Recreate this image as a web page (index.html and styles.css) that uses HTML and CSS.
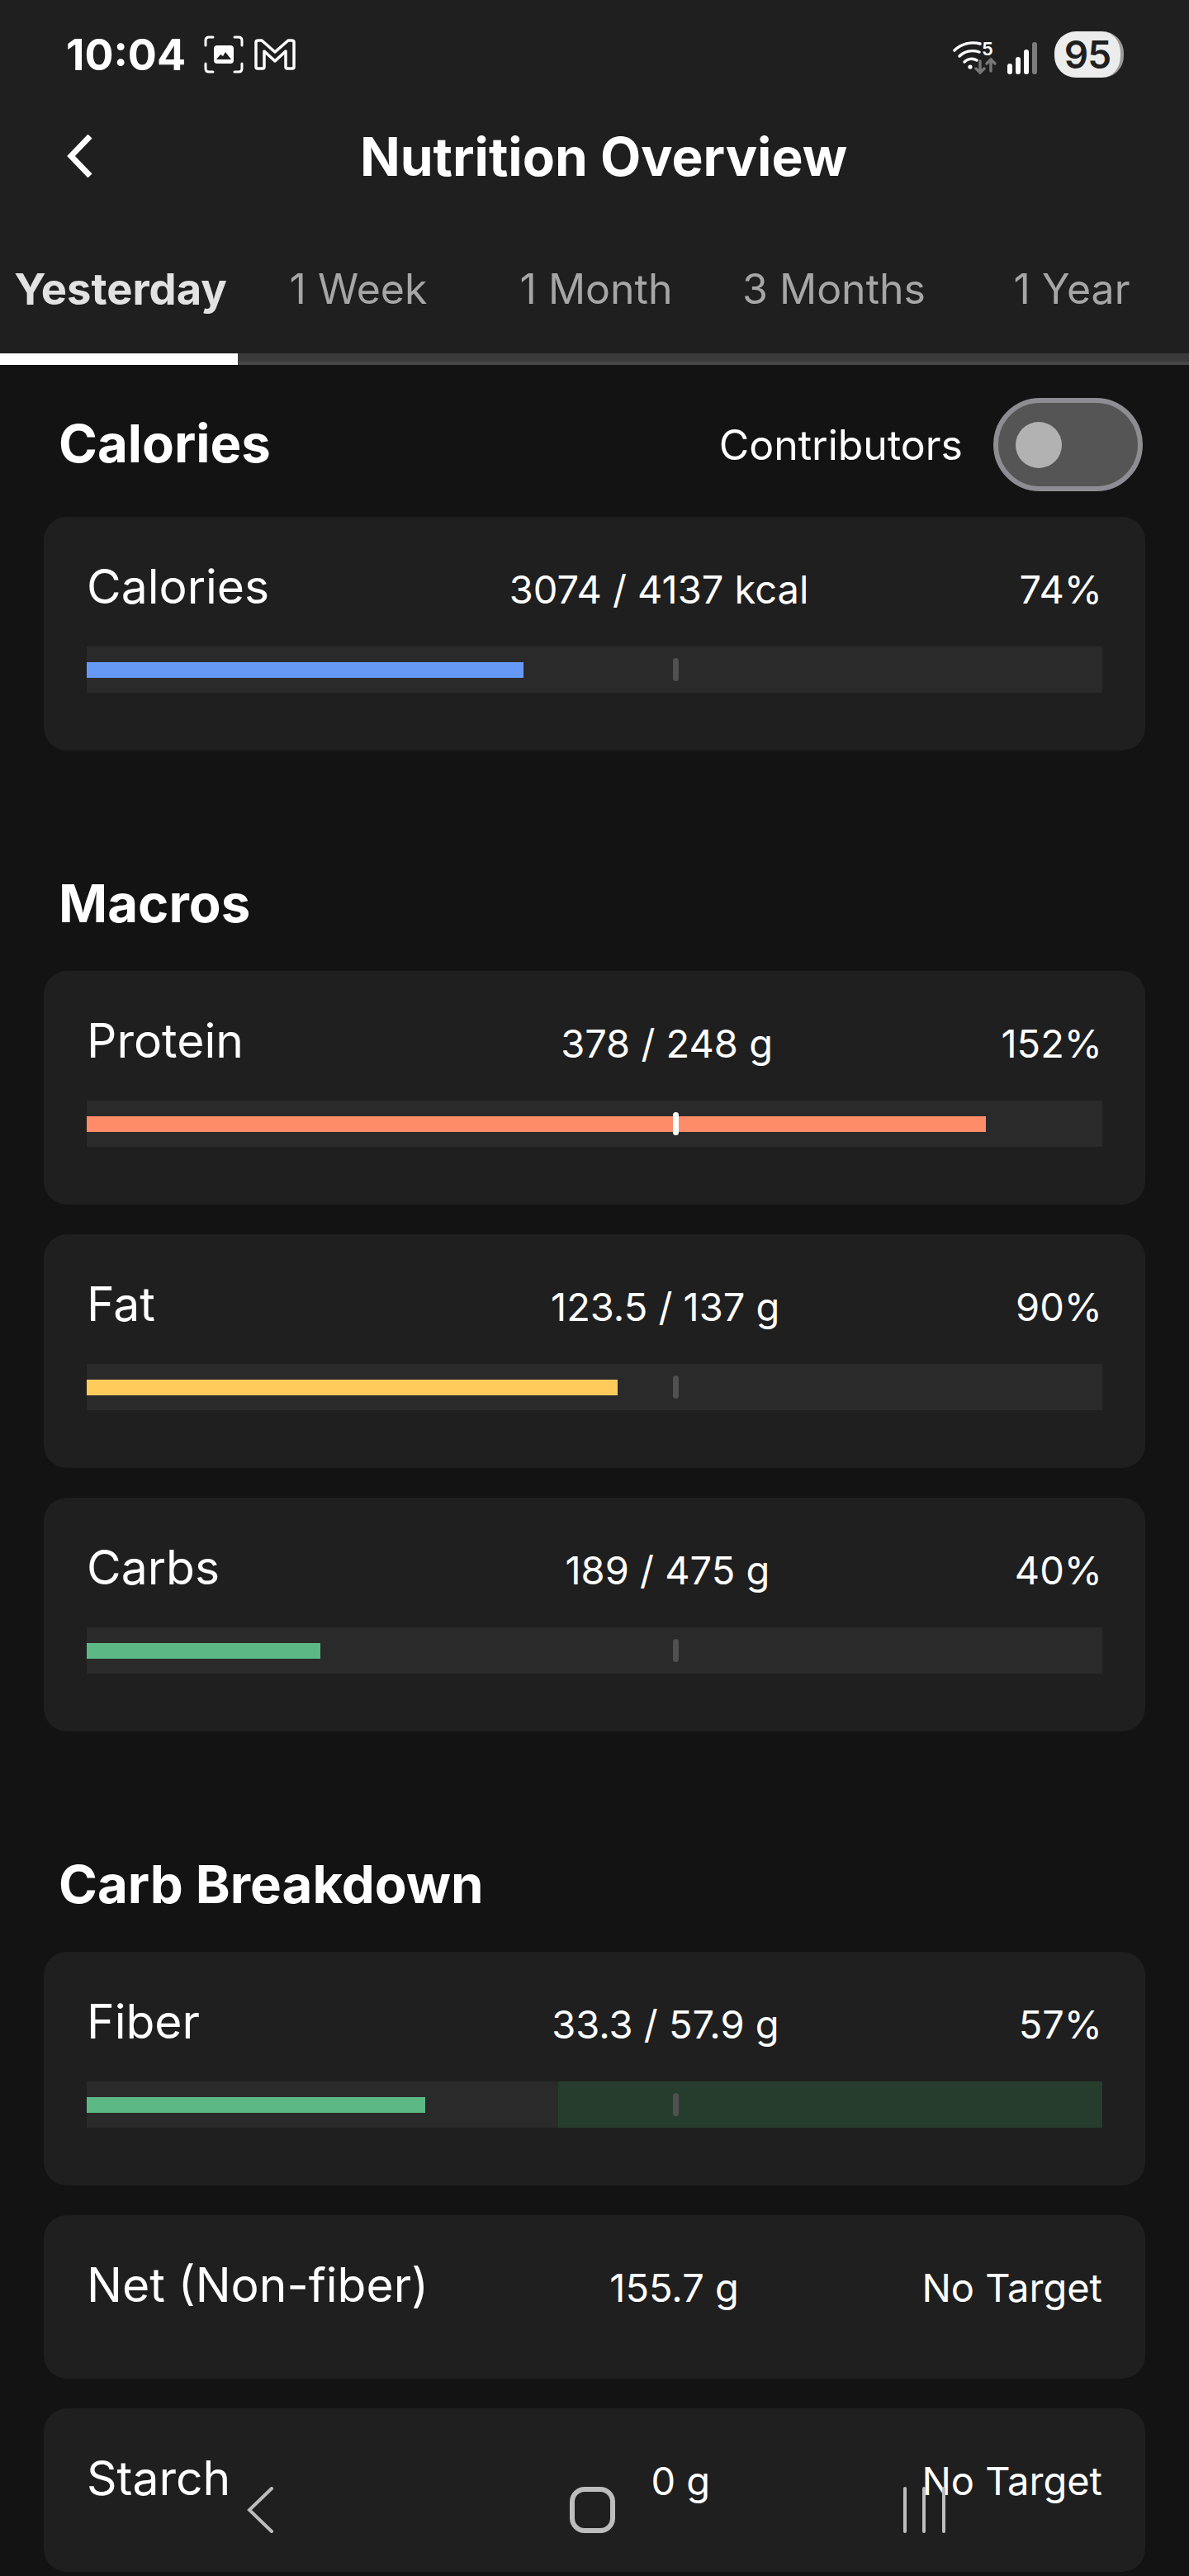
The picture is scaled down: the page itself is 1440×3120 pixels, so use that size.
FILE: index.html
```html
<!DOCTYPE html>
<html lang="en">

<head>
    <meta charset="UTF-8">
    <meta name="viewport" content="width=device-width, initial-scale=1.0">
    <title>Nutrition Overview</title>
    <link rel="stylesheet" href="styles.css">
</head>

<body>
    <div class="page">
        <div class="top">
            <div class="status">
                <div class="status-left">
                    <span class="time">10:04</span>
                    <svg class="icon-shot" viewBox="0 0 48 46" fill="none" stroke="#fff" stroke-width="3" stroke-linecap="round">
                        <path d="M2 12V6q0-4 4-4h5M37 2h5q4 0 4 4v6M46 34v6q0 4-4 4h-5M11 44H6q-4 0-4-4v-6" />
                        <rect x="12" y="12" width="24" height="22" rx="4" fill="#fff" stroke="none" />
                        <path d="M15 29l5-6 3 2 3-5 7 9z" fill="#1f1f1f" stroke="none" />
                    </svg>
                    <svg class="icon-mail" viewBox="0 0 50 38" fill="none" stroke="#fff" stroke-width="3.5" stroke-linejoin="round">
                        <path d="M2 4q0-2 3-2h4l16 14L41 2h4q3 0 3 2v30q0 2-2 2h-6q-2 0-2-2V15L25 27 12 15v19q0 2-2 2H4q-2 0-2-2z" />
                    </svg>
                </div>
                <div class="status-right">
                    <svg class="icon-wifi" viewBox="0 0 54 40" fill="none" stroke="#fff" stroke-width="3.4" stroke-linecap="round">
                        <path d="M2 11C10 3 22 0 33 3" />
                        <path d="M8 18c6-6 15-8 24-5" />
                        <path d="M14 25c4-4 10-5 15-2" />
                        <circle cx="21" cy="31" r="2.6" fill="#fff" stroke="none" />
                        <path d="M33 24v14M28 33l5 5 5-5" stroke="#777" />
                        <path d="M46 36V22M41 27l5-5 5 5" stroke="#777" />
                    </svg>
                    <span class="wifi-num">5</span>
                    <svg class="icon-signal" viewBox="0 0 36 39" fill="#fff">
                        <rect x="0" y="26" width="6" height="13" rx="3" />
                        <rect x="10" y="18" width="6" height="21" rx="3" />
                        <rect x="20" y="9" width="6" height="30" rx="3" />
                        <rect x="30" y="0" width="6" height="39" rx="3" fill="#7d7d7d" />
                    </svg>
                    <span class="battery">95</span>
                </div>
            </div>
            <div class="title-bar">
                <svg class="back" viewBox="0 0 32 52" fill="none" stroke="#fff" stroke-width="7">
                    <path d="M28 2L5 26l23 24" />
                </svg>
                <h1>Nutrition Overview</h1>
            </div>
            <div class="tabs">
                <div class="tab active">Yesterday</div>
                <div class="tab">1 Week</div>
                <div class="tab">1 Month</div>
                <div class="tab">3 Months</div>
                <div class="tab">1 Year</div>
            </div>
            <div class="tab-track">
                <div class="tab-line"></div>
            </div>
        </div>

        <div class="first-head">
            <h2>Calories</h2>
            <div class="switch-wrap">
                <span>Contributors</span>
                <div class="switch">
                    <div class="knob"></div>
                </div>
            </div>
        </div>
        <div class="cards">
            <div class="card">
                <div class="row"><span class="name">Calories</span><span class="val">3074 / 4137 kcal</span><span class="pct">74%</span></div>
                <div class="bar">
                    <div class="fill blue" style="width: 43%"></div>
                    <div class="tick"></div>
                </div>
            </div>
        </div>

        <h2 class="section">Macros</h2>
        <div class="cards">
            <div class="card">
                <div class="row"><span class="name">Protein</span><span class="val">378 / 248 g</span><span class="pct">152%</span></div>
                <div class="bar">
                    <div class="fill orange" style="width: 88.5%"></div>
                    <div class="tick over"></div>
                </div>
            </div>
            <div class="card">
                <div class="row"><span class="name">Fat</span><span class="val">123.5 / 137 g</span><span class="pct">90%</span></div>
                <div class="bar">
                    <div class="fill yellow" style="width: 52.3%"></div>
                    <div class="tick"></div>
                </div>
            </div>
            <div class="card">
                <div class="row"><span class="name">Carbs</span><span class="val">189 / 475 g</span><span class="pct">40%</span></div>
                <div class="bar">
                    <div class="fill green" style="width: 23%"></div>
                    <div class="tick"></div>
                </div>
            </div>
        </div>

        <h2 class="section">Carb Breakdown</h2>
        <div class="cards">
            <div class="card">
                <div class="row"><span class="name">Fiber</span><span class="val">33.3 / 57.9 g</span><span class="pct">57%</span></div>
                <div class="bar">
                    <div class="zone" style="left: 46.4%"></div>
                    <div class="fill green" style="width: 33.3%"></div>
                    <div class="tick"></div>
                </div>
            </div>
            <div class="card plain">
                <div class="row"><span class="name">Net (Non-fiber)</span><span class="val">155.7 g</span><span class="pct">No Target</span></div>
            </div>
            <div class="card plain">
                <div class="row"><span class="name">Starch</span><span class="val">0 g</span><span class="pct">No Target</span></div>
            </div>
        </div>

        <div class="nav">
            <svg viewBox="0 0 60 56" fill="none" stroke="#bdbdbd" stroke-width="4" stroke-linecap="round">
                <path d="M44 2L17 28l27 26" />
            </svg>
            <svg viewBox="0 0 60 56" fill="none" stroke="#bdbdbd" stroke-width="6">
                <rect x="6" y="3" width="49" height="50" rx="15" />
            </svg>
            <svg viewBox="0 0 60 56" fill="none" stroke="#bdbdbd" stroke-width="4" stroke-linecap="round">
                <path d="M7 2v52M30 2v52M54 2v52" />
            </svg>
        </div>
    </div>
</body>

</html>
```

FILE: styles.css
```css
* {
    box-sizing: border-box;
}

body {
    margin: 0;
    background: #131313;
    color: #fff;
    font-family: Inter, "Noto Sans", sans-serif;
}

.page {
    position: relative;
    width: 1440px;
    height: 3120px;
    overflow: hidden;
}

/* top bar */
.top {
    background: #1f1f1f;
}

.status {
    height: 132px;
    padding: 0 79px 0 80px;
    display: flex;
    justify-content: space-between;
    align-items: center;
}

.status-left,
.status-right {
    display: flex;
    align-items: center;
}

.time {
    font-size: 52px;
    font-weight: 700;
    margin-right: 22px;
}

.icon-shot {
    width: 48px;
    height: 46px;
    margin-right: 13px;
}

.icon-mail {
    width: 50px;
    height: 38px;
}

.icon-wifi {
    width: 54px;
    height: 40px;
    margin-top: 8px;
}

.wifi-num {
    position: absolute;
    top: 46px;
    left: 1189px;
    font-size: 22px;
    font-weight: 600;
}

.icon-signal {
    width: 36px;
    height: 39px;
    margin: 8px 21px 0 12px;
}

.battery {
    width: 84px;
    height: 56px;
    border-radius: 26px;
    background: #ececec;
    border-right: 4px solid #9a9a9a;
    color: #1f1f1f;
    font-size: 46px;
    font-weight: 600;
    line-height: 56px;
    text-align: center;
    letter-spacing: -1px;
}

.title-bar {
    position: relative;
    height: 114px;
    display: flex;
    align-items: center;
    justify-content: center;
}

.back {
    position: absolute;
    left: 81px;
    top: 31px;
    width: 32px;
    height: 52px;
}

h1 {
    margin: 0 0 0 22px;
    font-size: 64px;
    font-weight: 700;
}

.tabs {
    padding-top: 26px;
    height: 182px;
    display: grid;
    grid-template-columns: repeat(5, 1fr);
    align-items: center;
}

.tab {
    text-align: center;
    font-size: 50px;
    color: #a6a6a6;
    padding-left: 4px;
}

.tab.active {
    color: #e2e2e2;
    font-size: 52.5px;
    font-weight: 700;
    padding-left: 4px;
}

.tab-track {
    height: 14px;
    background: #3a3a3a;
    border-bottom: 4px solid #484848;
}

.tab-line {
    width: 20%;
    height: 14px;
    background: #fff;
}

/* sections */
h2 {
    margin: 0;
    font-size: 63.5px;
    line-height: 60px;
    font-weight: 700;
}

.first-head {
    margin: 40px 56px 31px 71px;
    display: flex;
    justify-content: space-between;
    align-items: center;
}

.first-head h2 {
    margin-bottom: 3px;
}

.switch-wrap {
    display: flex;
    align-items: center;
    gap: 37px;
    font-size: 50px;
}

.switch {
    width: 181px;
    height: 113px;
    padding-left: 21px;
    border: 6px solid #8d8d93;
    border-radius: 57px;
    background: #555;
    display: flex;
    align-items: center;
}

.knob {
    width: 56px;
    height: 56px;
    border-radius: 50%;
    background: #b2b2b2;
}

.section {
    margin: 155px 0 52px 71px;
}

.cards {
    margin: 0 53px;
    display: flex;
    flex-direction: column;
    gap: 36px;
}

.card {
    height: 283px;
    padding: 55px 52px 0;
    border-radius: 28px;
    background: #1f1f1f;
}

.card.plain {
    height: 198px;
}

/* three texts on one baseline, the middle one drifts with its width */
.row {
    height: 62px;
    display: grid;
    grid-template-columns: 59fr auto 41fr;
    align-items: baseline;
    line-height: 60px;
    font-size: 47px;
}

.name,
.pct {
    grid-row: 1;
    grid-column: 1 / 4;
}

.name {
    font-size: 57px;
}

.val {
    grid-row: 1;
    grid-column: 2;
}

.pct {
    justify-self: end;
}

.bar {
    position: relative;
    height: 56px;
    margin-top: 40px;
    background: #2a2a2a;
    display: flex;
    align-items: center;
}

.fill {
    position: relative;
    height: 19px;
}

.blue {
    background: #6699f5;
}

.orange {
    background: #ff8c69;
}

.yellow {
    background: #ffcc5c;
}

.green {
    background: #5cb884;
}

.zone {
    position: absolute;
    top: 0;
    right: 0;
    bottom: 0;
    background: #263d2d;
}

.tick {
    position: absolute;
    top: 14px;
    left: 710px;
    width: 7px;
    height: 28px;
    border-radius: 4px;
    background: #505050;
}

.tick.over {
    background: #fff;
}

/* phone nav floating over the list */
.nav {
    position: absolute;
    left: 0;
    right: 0;
    top: 3012px;
    padding-right: 7px;
    display: flex;
    justify-content: center;
    gap: 342px;
}

.nav svg {
    width: 60px;
    height: 56px;
}
```
